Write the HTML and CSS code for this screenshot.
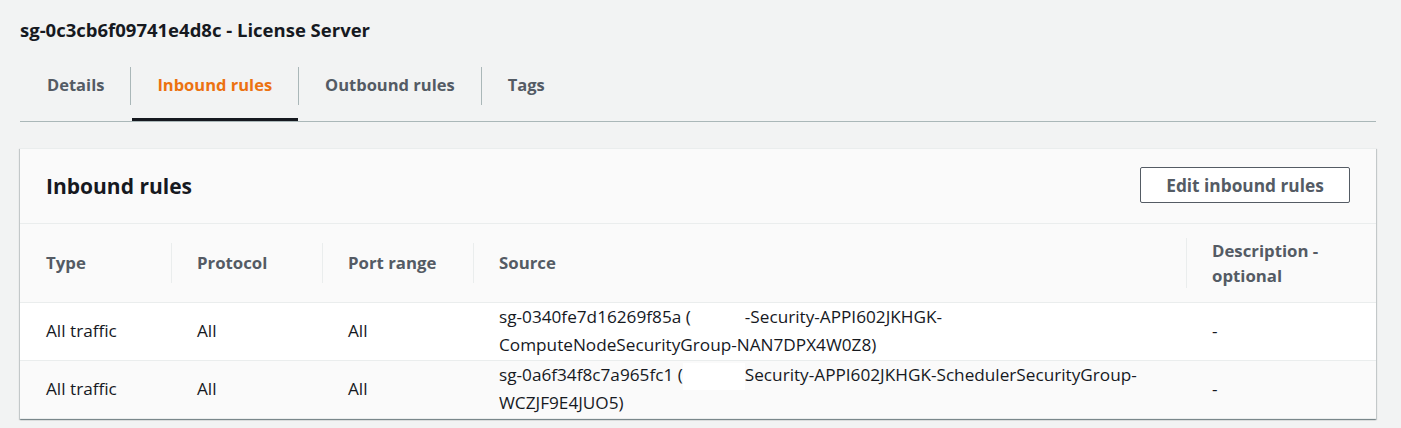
FILE: index.html
```html
<!DOCTYPE html>
<html>
<head>
<meta charset="utf-8">
<link rel="stylesheet" href="styles.css">
</head>
<body>
<div class="page">
  <h1 class="title">sg-0c3cb6f09741e4d8c - License Server</h1>
  <ul class="tabs">
    <li class="tab"><span class="tab-label">Details</span></li>
    <li class="tab active"><span class="tab-label">Inbound rules</span></li>
    <li class="tab"><span class="tab-label">Outbound rules</span></li>
    <li class="tab"><span class="tab-label">Tags</span></li>
  </ul>
  <section class="card">
    <header class="card-header">
      <h2 class="card-title">Inbound rules</h2>
      <button class="btn">Edit inbound rules</button>
    </header>
    <table class="rules">
      <colgroup>
        <col class="c1"><col class="c2"><col class="c3"><col class="c4"><col class="c5">
      </colgroup>
      <thead>
        <tr>
          <th><span class="th-in">Type</span></th>
          <th><span class="th-in sep">Protocol</span></th>
          <th><span class="th-in sep">Port range</span></th>
          <th><span class="th-in sep">Source</span></th>
          <th><span class="th-in sep">Description -<br>optional</span></th>
        </tr>
      </thead>
      <tbody>
        <tr class="odd">
          <td>All traffic</td>
          <td>All</td>
          <td>All</td>
          <td>sg-0340fe7d16269f85a (<span class="redact r1"></span>-Security-APPI602JKHGK-<br>ComputeNodeSecurityGroup-NAN7DPX4W0Z8)</td>
          <td>-</td>
        </tr>
        <tr class="even">
          <td>All traffic</td>
          <td>All</td>
          <td>All</td>
          <td>sg-0a6f34f8c7a965fc1 (<span class="redact r2"></span>Security-APPI602JKHGK-SchedulerSecurityGroup-<br>WCZJF9E4JUO5)</td>
          <td>-</td>
        </tr>
      </tbody>
    </table>
  </section>
</div>
</body>
</html>
```

FILE: styles.css
```css
* { box-sizing: border-box; }
html, body { margin: 0; padding: 0; }
body {
  background: #f2f3f3;
  font-family: "Open Sans", "Noto Sans", "Liberation Sans", sans-serif;
  color: #16191f;
  width: 1401px;
  height: 428px;
  overflow: hidden;
}
.page {
  padding: 17px 25px 0 20px;
}
.title {
  margin: 0;
  font-size: 18.5px;
  font-weight: 700;
  line-height: 26px;
  color: #16191f;
}
.tabs {
  list-style: none;
  margin: 19px 0 0 0;
  padding: 0;
  display: flex;
  border-bottom: 1px solid #aab7b8;
  height: 60px;
}
.tab {
  position: relative;
  display: flex;
  align-items: flex-start;
}
.tab + .tab::before {
  content: "";
  position: absolute;
  left: 0;
  top: 5px;
  height: 38px;
  width: 1px;
  background: #aab7b8;
}
.tab-label {
  position: relative;
  display: block;
  padding: 12px 26px 0 27px;
  height: 59px;
  font-size: 16.5px;
  font-weight: 700;
  line-height: 22px;
  color: #545b64;
}
.tab.active .tab-label {
  color: #ec7211;
}
.tab.active .tab-label::after {
  content: "";
  position: absolute;
  left: 2px;
  right: 0;
  bottom: 0;
  height: 3px;
  background: #16191f;
}
.card {
  margin-top: 26px;
  background: #fff;
  box-shadow: 0 1px 1px 0 rgba(0,28,36,0.3), 1px 1px 1px 0 rgba(0,28,36,0.15), -1px 1px 1px 0 rgba(0,28,36,0.15);
  border-top: 1px solid #eaeded;
}
.card-header {
  display: flex;
  align-items: center;
  justify-content: space-between;
  height: 75px;
  padding: 0 26px;
  background: #fafafa;
  border-bottom: 1px solid #eaeded;
}
.card-title {
  margin: 0;
  font-size: 21px;
  font-weight: 700;
  line-height: 28px;
}
.btn {
  font-family: inherit;
  font-size: 17.3px;
  font-weight: 700;
  color: #545b64;
  background: #fff;
  border: 1px solid #545b64;
  border-radius: 2px;
  height: 36px;
  width: 210px;
  padding: 0;
  margin: 0 0 2px 0;
}
.rules {
  width: 100%;
  border-collapse: collapse;
  table-layout: fixed;
}
.c1, .c2, .c3 { width: 151px; }
.c5 { width: 190px; }
.rules th {
  background: #fafafa;
  height: 78px;
  padding: 0;
  text-align: left;
  font-size: 16.8px;
  font-weight: 700;
  color: #545b64;
  line-height: 25px;
  border-bottom: 1px solid #eaeded;
  vertical-align: middle;
}
.th-in {
  display: block;
  padding-left: 26px;
}
.th-in.sep {
  border-left: 1px solid #eaeded;
  padding-left: 25px;
  min-height: 40px;
  display: flex;
  align-items: center;
}
.rules td {
  height: 58px;
  padding: 0 0 0 26px;
  font-size: 17.2px;
  line-height: 26px;
  color: #16191f;
  border-bottom: 1px solid #eaeded;
  vertical-align: middle;
}
.rules tbody tr.even td { background: #fafafa; }
.redact {
  display: inline-block;
  height: 27px;
  vertical-align: middle;
  background: #fff;
}
.r1 { width: 54px; }
.r2 { width: 62px; }
```
